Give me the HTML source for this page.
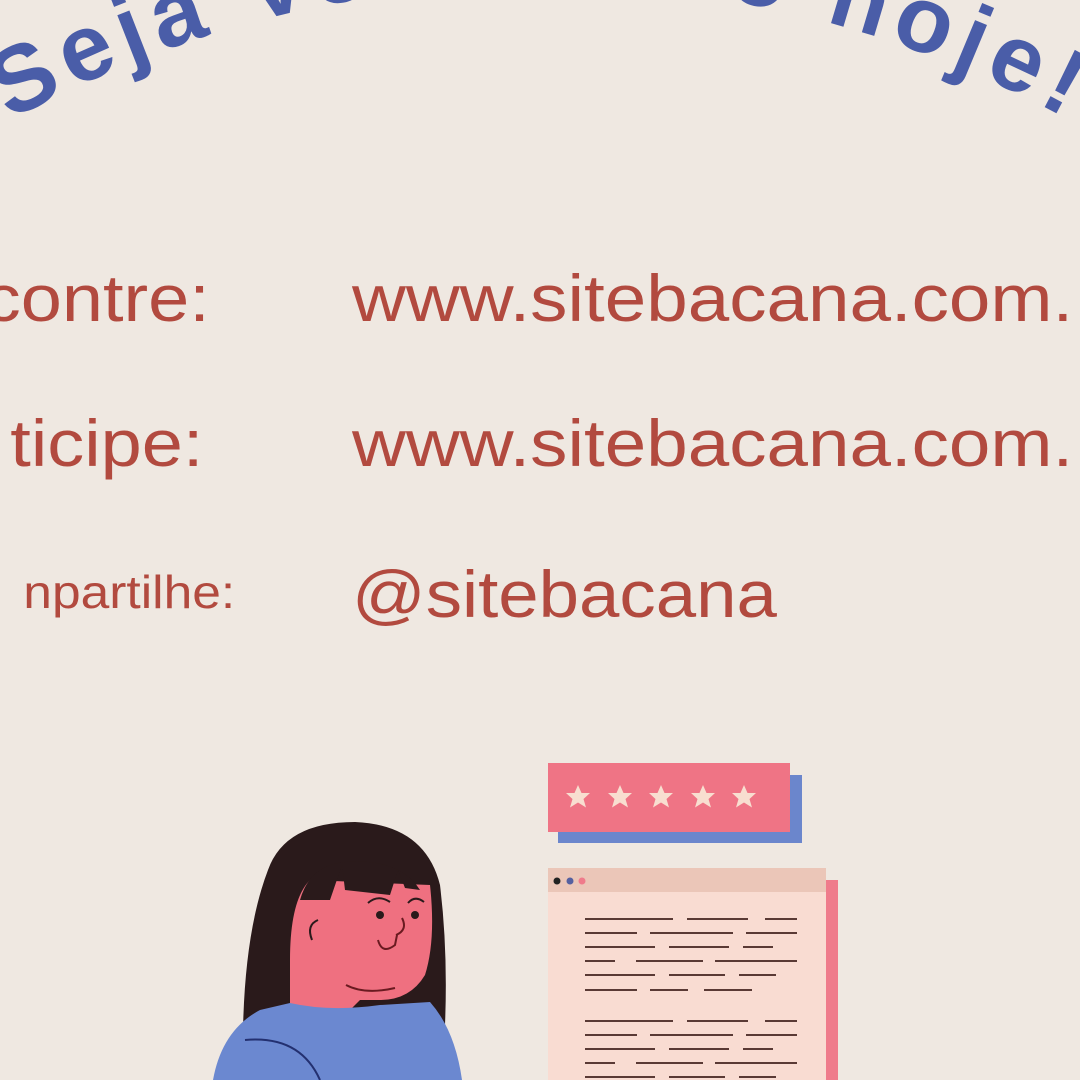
<!DOCTYPE html>
<html><head><meta charset="utf-8"><style>
html,body{margin:0;padding:0}
body{width:1080px;height:1080px;background:#efe8e1;position:relative;overflow:hidden;font-family:"Liberation Sans",sans-serif;color:#b24a3f}
.t{position:absolute;white-space:nowrap;font-size:66px;line-height:1;transform:scaleX(1.13);transform-origin:0 0}
.l{position:absolute;white-space:nowrap;line-height:1;text-align:right;transform:scaleX(1.12);transform-origin:100% 0}
</style></head><body>
<svg width="1080" height="1080" style="position:absolute;left:0;top:0">
<defs><path id="arc" d="M10,120.7 A1096,1096 0 0 1 1075,123.4"/></defs>
<text font-family="Liberation Sans, sans-serif" font-size="94" font-weight="bold" fill="#4a5da8"><textPath href="#arc" textLength="1100" lengthAdjust="spacing">Seja Voluntário hoje!</textPath></text>

<rect x="558" y="775" width="244" height="68" fill="#6b86cc"/>
<rect x="548" y="763" width="242" height="69" fill="#ef7485"/>
<g fill="#f8ded0">
<polygon id="st" points="578,785 581.5,793 590,793 583.5,799 586,807.5 578,802.5 570,807.5 572.5,799 566,793 574.5,793"/>
<use href="#st" x="42"/><use href="#st" x="83"/><use href="#st" x="125"/><use href="#st" x="166"/>
</g>
<rect x="826" y="880" width="12" height="200" fill="#ef7b8b"/>
<rect x="548" y="868" width="278" height="212" fill="#f9dcd2"/>
<rect x="548" y="868" width="278" height="24" fill="#ebc6b8"/>
<circle cx="557" cy="881" r="3.5" fill="#222"/><circle cx="570" cy="881" r="3.5" fill="#5560a0"/><circle cx="582" cy="881" r="3.5" fill="#ef7b8b"/>
<g stroke="#5a3a35" stroke-width="2">
<path d="M585 919h88M687 919h61M765 919h32M585 933h52M650 933h83M746 933h51M585 947h70M669 947h60M743 947h30M585 961h30M636 961h67M715 961h82M585 975h70M669 975h56M739 975h37M585 990h52M650 990h38M704 990h48"/>
<path d="M585 1021h88M687 1021h61M765 1021h32M585 1035h52M650 1035h83M746 1035h51M585 1049h70M669 1049h60M743 1049h30M585 1063h30M636 1063h67M715 1063h82M585 1077h70M669 1077h56M739 1077h37"/>
</g>
<path d="M268,870 Q285,822 355,822 Q425,825 440,885 Q448,950 445,1025 L400,1030 L300,1030 L243,1030 Q245,930 268,870Z" fill="#2a1a1b"/>
<path d="M290,1020 L290,960 Q290,900 310,880 L430,885 Q436,940 425,975 Q410,1000 380,1000 L360,1000 L340,1020Z" fill="#ef7080"/>
<circle cx="314" cy="928" r="17" fill="#ef7080"/>
<path d="M318,920 Q306,925 312,940" stroke="#2a1a1b" stroke-width="2" fill="none"/>
<path d="M300,900 Q310,865 345,862 Q400,858 420,890 L405,888 L398,870 L390,895 L345,890 L342,865 L330,900 Z" fill="#2a1a1b"/>
<circle cx="380" cy="915" r="4" fill="#2a1a1b"/><circle cx="415" cy="915" r="4" fill="#2a1a1b"/>
<path d="M368,903 Q378,894 390,902M408,903 Q415,895 424,902" stroke="#2a1a1b" stroke-width="2" fill="none"/>
<path d="M402,918 Q408,930 396,935 M378,940 Q382,955 395,945 L397,935" stroke="#6a1a20" stroke-width="2" fill="none"/>
<path d="M346,985 Q365,995 395,988" stroke="#6a1a20" stroke-width="2" fill="none"/>
<path d="M213,1080 Q222,1030 260,1010 L290,1003 Q330,1012 380,1005 L430,1002 Q455,1030 462,1080Z" fill="#6b88d0"/>
<path d="M245,1040 Q300,1035 320,1080" stroke="#233070" stroke-width="2" fill="none"/>
</svg>

<div class="l" style="right:870px;top:265px;font-size:66px">contre:</div>
<div class="t" style="left:352px;top:265px">www.sitebacana.com.</div>
<div class="l" style="right:877px;top:410px;font-size:66px">ticipe:</div>
<div class="t" style="left:352px;top:410px">www.sitebacana.com.</div>
<div class="l" style="right:845px;top:569px;font-size:46px">npartilhe:</div>
<div class="t" style="left:352px;top:561px;transform:scaleX(1.1)">@sitebacana</div>
</body></html>
